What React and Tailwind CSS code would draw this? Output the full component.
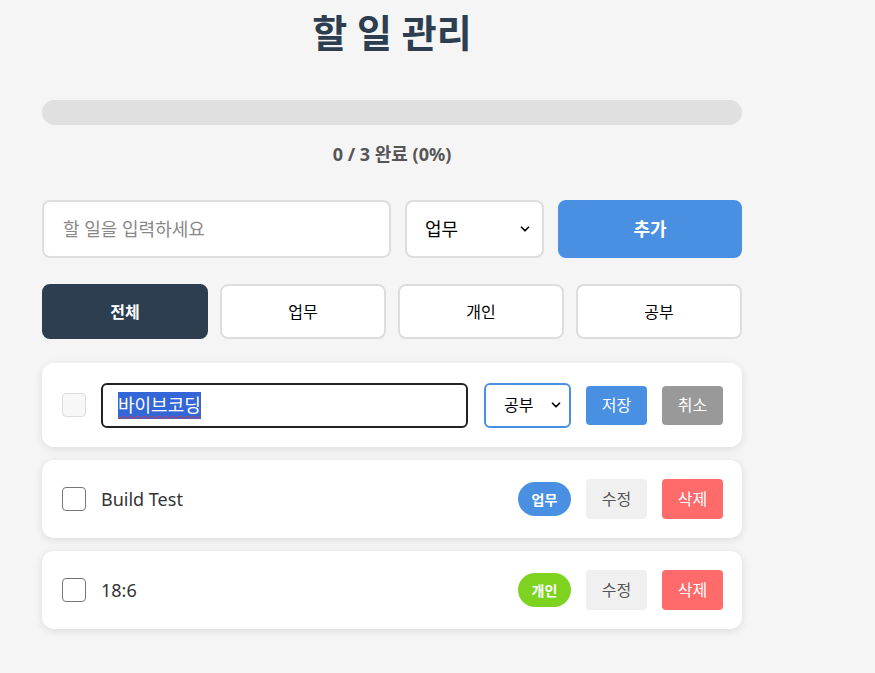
import { ChevronDown } from "lucide-react";

const FONT = "font-['Noto_Sans','Noto_Sans_CJK_KR',sans-serif]";

const filters = ["전체", "업무", "개인", "공부"];

const todos = [
  { id: 2, text: "Build Test", category: "업무", badge: "bg-[#4a90e2]" },
  { id: 3, text: "18:6", category: "개인", badge: "bg-[#7ed321]" },
];

const Checkbox = ({ disabled }) => (
  <div
    className={
      disabled
        ? "w-6 h-6 shrink-0 rounded-[4px] border border-[#ddd] bg-[#f7f7f7]"
        : "w-6 h-6 shrink-0 rounded-[4px] border border-[#767676] bg-white"
    }
  />
);

export default function App() {
  return (
    <div className={`min-h-screen bg-[#f5f5f5] ${FONT} text-[#333]`}>
      <div className="w-[700px] ml-[42px] pt-[4px] pb-10">
        {/* Header */}
        <h1 className="text-[38px] leading-[56px] font-bold text-[#2c3e50] text-center">할 일 관리</h1>

        {/* Progress */}
        <div className="mt-[40px] h-[25px] rounded-full bg-[#e0e0e0] overflow-hidden">
          <div className="h-full bg-[#4a90e2]" style={{ width: "0%" }} />
        </div>
        <p className="mt-[16px] text-center text-[18px] leading-[27px] font-bold text-[#555]">0 / 3 완료 (0%)</p>

        {/* Add form */}
        <div className="mt-[32px] flex gap-[14px]">
          <div className="w-[349px] h-[58px] flex items-center px-[19px] bg-white border-2 border-[#ddd] rounded-[8px] text-[18px] text-[#888]">
            할 일을 입력하세요
          </div>
          <div className="w-[139px] h-[58px] flex items-center justify-between pl-[18px] pr-[10px] bg-white border-2 border-[#ddd] rounded-[8px] text-[18px] text-black">
            <span>업무</span>
            <ChevronDown size={14} strokeWidth={3} />
          </div>
          <button className="flex-1 h-[58px] rounded-[8px] bg-[#4a90e2] text-white text-[18px] font-bold">추가</button>
        </div>

        {/* Filters */}
        <div className="mt-[26px] grid grid-cols-4 gap-[12px]">
          {filters.map((f, i) => (
            <button
              key={f}
              className={
                i === 0
                  ? "h-[55px] rounded-[8px] border-2 border-[#2c3e50] bg-[#2c3e50] text-white text-[16px] font-bold"
                  : "h-[55px] rounded-[8px] border-2 border-[#ddd] bg-white text-black text-[16px]"
              }
            >
              {f}
            </button>
          ))}
        </div>

        {/* List */}
        <div className="mt-[24px] flex flex-col gap-[13px]">
          <div className="h-[84px] flex items-center gap-[15px] pl-5 pr-[19px] bg-white rounded-[12px] shadow-[0_2px_8px_rgba(0,0,0,0.1)]">
            <Checkbox disabled />
            <div className="flex-1 h-[45px] flex items-center px-[15px] border-2 border-[#222] rounded-[6px] text-[18px]">
              <span className="bg-[#3366d6] text-white leading-[27px] underline decoration-wavy decoration-[#e33] decoration-1 underline-offset-[3px]">바이브코딩</span>
            </div>
            <div className="ml-[1px] w-[87px] h-[45px] flex items-center justify-between pl-[18px] pr-[6px] border-2 border-[#4a90e2] rounded-[6px] text-[16px] text-black">
              <span>공부</span>
              <ChevronDown size={14} strokeWidth={3} />
            </div>
            <button className="w-[61px] h-[39px] rounded-[4px] bg-[#4a90e2] text-white text-[16px]">저장</button>
            <button className="w-[61px] h-[39px] rounded-[4px] bg-[#999] text-white text-[16px]">취소</button>
          </div>

          {todos.map((t) => (
            <div
              key={t.id}
              className="h-[78px] flex items-center gap-[15px] pl-5 pr-[19px] bg-white rounded-[12px] shadow-[0_2px_8px_rgba(0,0,0,0.1)]"
            >
              <Checkbox />
              <span className="flex-1 text-[18px] text-[#333]">{t.text}</span>
              <span className={`w-[53px] h-[34px] flex items-center justify-center rounded-full ${t.badge} text-white text-[14px] font-bold`}>
                {t.category}
              </span>
              <button className="w-[61px] h-[40px] rounded-[4px] bg-[#f0f0f0] text-[#555] text-[16px]">수정</button>
              <button className="w-[61px] h-[40px] rounded-[4px] bg-[#ff6b6b] text-white text-[16px]">삭제</button>
            </div>
          ))}
        </div>
      </div>
    </div>
  );
}
